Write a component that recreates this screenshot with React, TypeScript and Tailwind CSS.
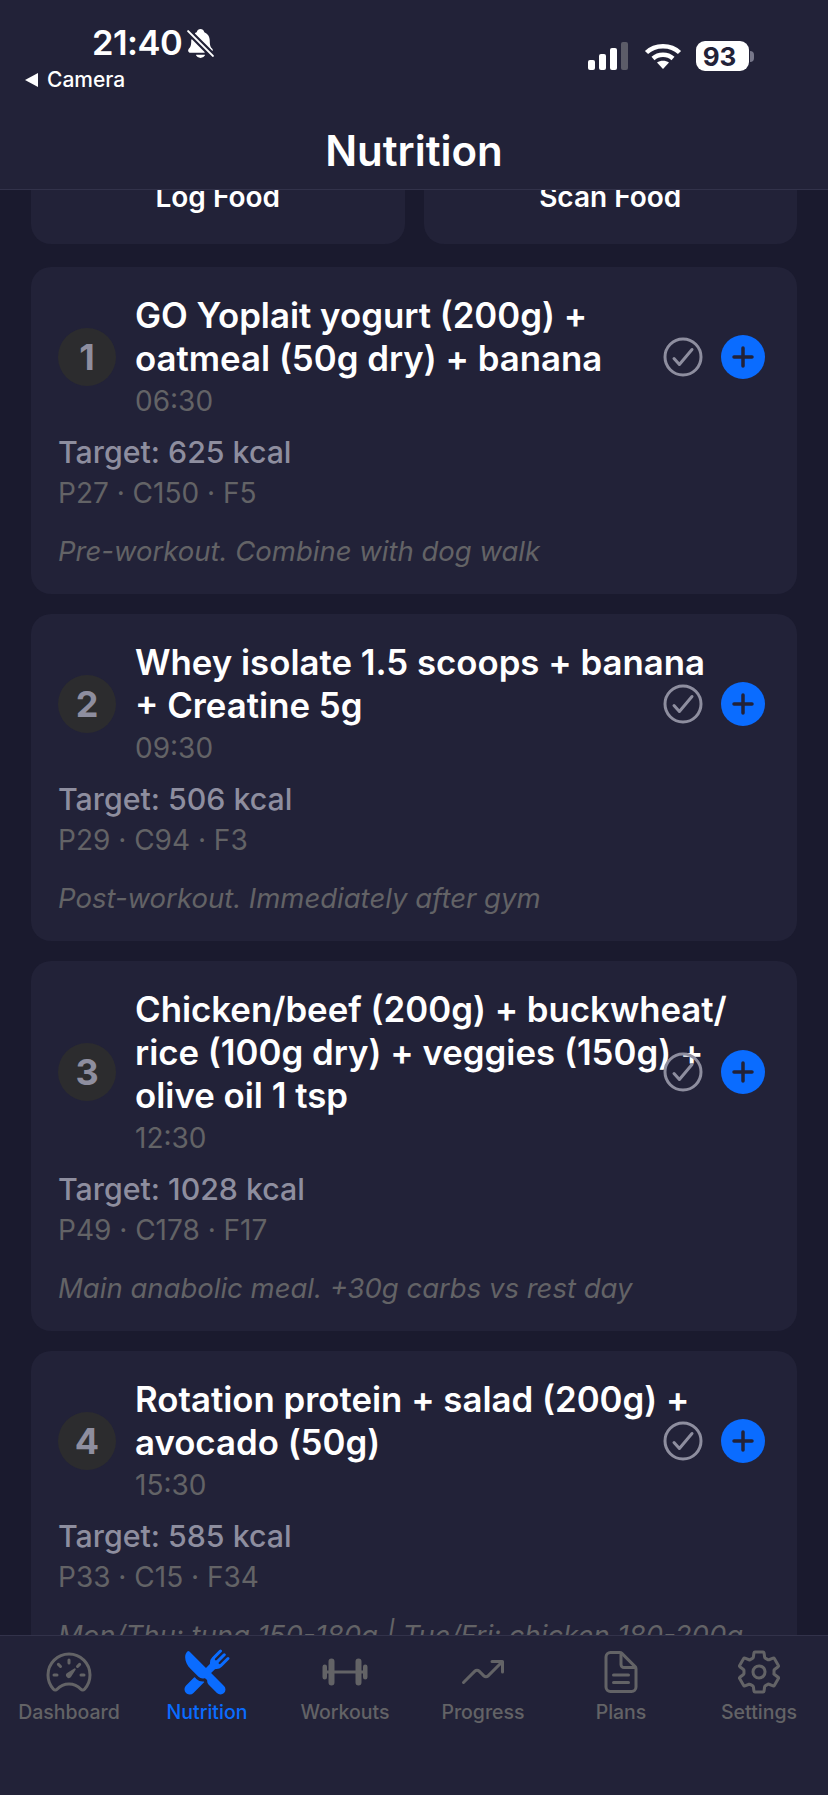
import { IoBarbellOutline, IoCheckmarkCircleOutline, IoDocumentTextOutline, IoNotificationsOff, IoRestaurant, IoSettingsOutline, IoSpeedometerOutline, IoTrendingUpOutline } from 'react-icons/io5'

const meals = [
  { id: 1, title: ['GO Yoplait yogurt (200g) +', 'oatmeal (50g dry) + banana'], time: '06:30', target: 625, macros: 'P27 · C150 · F5', note: 'Pre-workout. Combine with dog walk' },
  { id: 2, title: ['Whey isolate 1.5 scoops + banana', '+ Creatine 5g'], time: '09:30', target: 506, macros: 'P29 · C94 · F3', note: 'Post-workout. Immediately after gym' },
  { id: 3, title: ['Chicken/beef (200g) + buckwheat/', 'rice (100g dry) + veggies (150g) +', 'olive oil 1 tsp'], time: '12:30', target: 1028, macros: 'P49 · C178 · F17', note: 'Main anabolic meal. +30g carbs vs rest day' },
  { id: 4, title: ['Rotation protein + salad (200g) +', 'avocado (50g)'], time: '15:30', target: 585, macros: 'P33 · C15 · F34', note: 'Mon/Thu: tuna 150-180g | Tue/Fri: chicken 180-200g' },
]

const tabs = [
  { label: 'Dashboard', icon: IoSpeedometerOutline },
  { label: 'Nutrition', icon: IoRestaurant, active: true },
  { label: 'Workouts', icon: IoBarbellOutline },
  { label: 'Progress', icon: IoTrendingUpOutline },
  { label: 'Plans', icon: IoDocumentTextOutline },
  { label: 'Settings', icon: IoSettingsOutline },
]

const StatusBar = () => (
  <div className="relative h-[123px] text-white">
    <div className="absolute left-[92px] top-[23px] flex items-center gap-[2px]">
      <span className="text-[34.5px] leading-[40px] font-semibold tracking-[-0.5px]">21:40</span>
      <IoNotificationsOff className="text-[33px]" />
    </div>
    <div className="absolute left-[24px] top-[67px] flex items-center gap-[8px]">
      <svg width="15" height="16" viewBox="0 0 15 16">
        <path d="M14 1v14L1 8z" fill="#fff" />
      </svg>
      <span className="text-[21px] leading-[26px] font-medium">Camera</span>
    </div>
    <div className="absolute left-[588px] top-[41px] flex items-center gap-[14px]">
      <svg width="42" height="28" viewBox="0 0 42 28">
        <rect x="0" y="18" width="7" height="10" rx="2" fill="#fff" />
        <rect x="11" y="12" width="7" height="16" rx="2" fill="#fff" />
        <rect x="22" y="6" width="7" height="22" rx="2" fill="#fff" />
        <rect x="33" y="0" width="7" height="28" rx="2" fill="#5c5c68" />
      </svg>
      <svg width="38" height="28" viewBox="0 0 38 28" fill="none" stroke="#fff" strokeWidth="4.5">
        <path d="M2.500 10.500C11 2 27 2 35.500 10.500" />
        <path d="M9 16.500c5.500-5 14.500-5 20 0" />
        <path d="M19 27l-6-6.500c3.500-2.500 8.500-2.500 12 0z" fill="#fff" stroke="none" />
      </svg>
      <div className="flex items-center">
        <div className="flex h-[30px] w-[53px] items-center justify-center rounded-[9px] bg-white pr-[6px] text-[26px] font-bold text-[#222238]">93</div>
        <div className="ml-[1px] h-[11px] w-[4px] rounded-r-full bg-[#77778a]" />
      </div>
    </div>
  </div>
)

const MealCard = ({ meal }: { meal: (typeof meals)[number] }) => (
  <div className="overflow-hidden rounded-[20px] bg-[#222238] pt-[27px] pl-[27px] pb-[26px]">
    <div className="relative flex items-center">
      <div className="flex h-[58px] w-[58px] shrink-0 items-center justify-center rounded-full bg-[#2c2c2e] text-[36px] font-bold text-[#8e8e9f]">{meal.id}</div>
      <div className="ml-[19px]">
        {meal.title.map((line) => (
          <div key={line} className="text-[34.8px] leading-[43px] font-semibold whitespace-nowrap text-white">
            {line}
          </div>
        ))}
        <div className="mt-[3px] text-[28px] leading-[36px] text-[#636366]">{meal.time}</div>
      </div>
      <div className="absolute right-[32px] top-1/2 flex -translate-y-1/2 items-center gap-[14px]">
        <IoCheckmarkCircleOutline className="text-[48px] text-[#8e8e9f]" />
        <div className="flex h-[44px] w-[44px] items-center justify-center rounded-full bg-[#0a6cff]">
          <svg width="24" height="24" viewBox="0 0 24 24" stroke="#222238" strokeWidth="3.500" strokeLinecap="round">
            <path d="M12 3v18M3 12h18" />
          </svg>
        </div>
      </div>
    </div>
    <div className="mt-[13px] text-[30.3px] leading-[40px] font-medium whitespace-nowrap text-[#8e8e9f]">Target: {meal.target} kcal</div>
    <div className="mt-[2px] text-[28px] leading-[38px] whitespace-nowrap text-[#636366]">{meal.macros}</div>
    <div className="mt-[22px] text-[27.5px] leading-[34px] whitespace-nowrap text-[#636366] italic">{meal.note}</div>
  </div>
)

export default function App() {
  return (
    <div className="flex h-[1795px] w-[828px] flex-col overflow-hidden bg-[#1a1a2e] font-['Inter',sans-serif]">
      <header className="relative z-10 h-[190px] shrink-0 border-b border-[#32324a] bg-[#222238]">
        <StatusBar />
        <h1 className="text-center text-[42px] leading-[56px] font-semibold text-white">Nutrition</h1>
      </header>
      <main className="min-h-0 flex-1 overflow-hidden px-[31px]">
        <div className="-mt-[60px] flex flex-col gap-[20px]">
          <div className="mb-[3px] grid grid-cols-2 gap-[19px]">
            {['Log Food', 'Scan Food'].map((label) => (
              <div key={label} className="flex h-[114px] items-end justify-center rounded-[20px] bg-[#222238] pb-[29px] text-[28px] leading-[36px] font-semibold text-white">
                {label}
              </div>
            ))}
          </div>
          {meals.map((meal) => (
            <MealCard key={meal.id} meal={meal} />
          ))}
        </div>
      </main>
      <nav className="grid h-[160px] shrink-0 grid-cols-6 border-t border-[#32324a] bg-[#222238] pt-[12px]">
        {tabs.map((tab) => {
          const Icon = tab.icon
          return (
            <div key={tab.label} className={`flex flex-col items-center ${tab.active ? 'text-[#0a6cff]' : 'text-[#636366]'}`}>
              <Icon className="text-[48px]" />
              <span className="mt-[4px] text-[19.5px] leading-[24px] font-medium">{tab.label}</span>
            </div>
          )
        })}
      </nav>
    </div>
  )
}
